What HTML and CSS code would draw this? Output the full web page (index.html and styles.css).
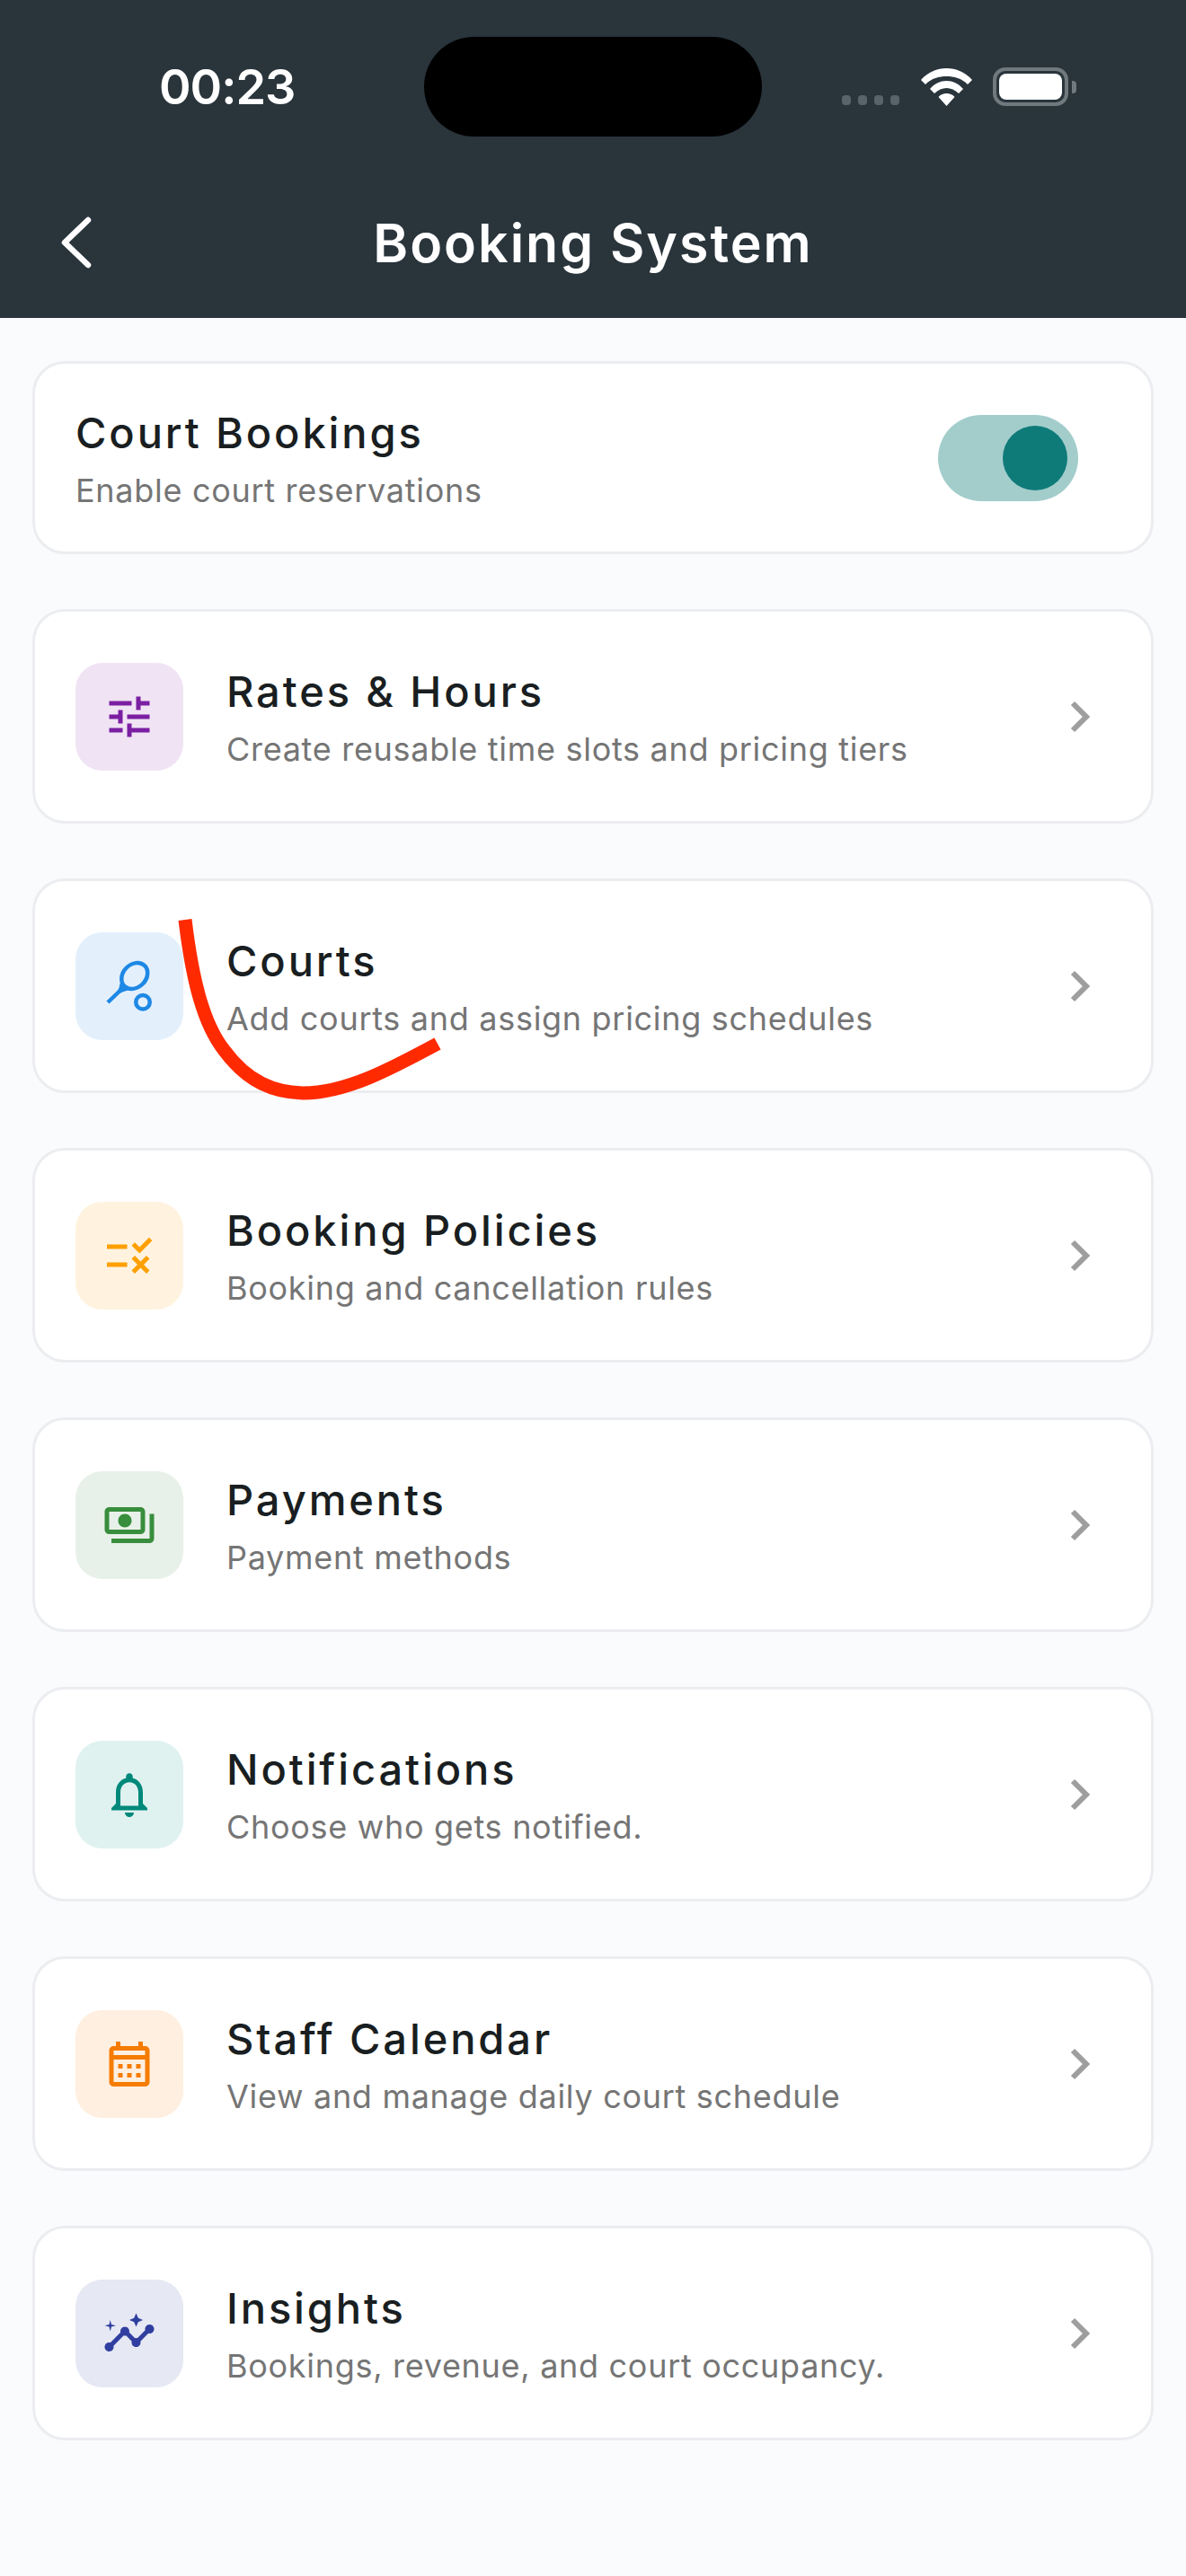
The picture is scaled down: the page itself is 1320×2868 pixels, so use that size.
FILE: index.html
```html
<!DOCTYPE html>
<html lang="en">
<head>
    <meta charset="UTF-8">
    <meta name="viewport" content="width=device-width, initial-scale=1.0">
    <title>Booking System</title>
    <link rel="stylesheet" href="styles.css">
</head>
<body>
    <header class="app-header">
        <div class="status-bar">
            <div class="status-time">00:23</div>
            <div class="island"></div>
            <div class="status-icons">
                <div class="signal">
                    <span></span><span></span><span></span><span></span>
                </div>
                <svg class="wifi" viewBox="0 0 57 42">
                    <path d="M28.500 0C18 0 8 4 0 13l5 5C12 11 20 9 28.500 9S45 11 52 18l5-5C49 4 39 0 28.500 0z"/>
                    <path d="M28.500 14C22 14 15 17 10 23l5 5C19 24 24 22 28.500 22S38 24 42 28l5-5C42 17 35 14 28.500 14z"/>
                    <path d="M28.500 28c-3.500 0-6.500 1-9 4l9 10 9-10c-2.500-3-5.500-4-9-4z"/>
                </svg>
                <div class="battery">
                    <div class="battery-level"></div>
                </div>
                <div class="battery-cap"></div>
            </div>
        </div>
        <div class="nav-bar">
            <svg class="back-icon" viewBox="0 0 40 60">
                <path d="M34 5L8 30l26 25"/>
            </svg>
            <h1>Booking System</h1>
        </div>
    </header>

    <main class="settings-list">
        <section class="card card-toggle">
            <div class="card-text">
                <h2>Court Bookings</h2>
                <p>Enable court reservations</p>
            </div>
            <div class="toggle">
                <div class="toggle-knob"></div>
            </div>
        </section>

        <a class="card card-link">
            <div class="icon-box purple">
                <svg viewBox="0 0 24 24"><path d="M3 17v2h6v-2H3zM3 5v2h10V5H3zm10 16v-2h8v-2h-8v-2h-2v6h2zM7 9v2H3v2h4v2h2V9H7zm14 4v-2H11v2h10zm-6-4h2V7h4V5h-4V3h-2v6z"/></svg>
            </div>
            <div class="card-text">
                <h2>Rates &amp; Hours</h2>
                <p>Create reusable time slots and pricing tiers</p>
            </div>
            <svg class="chevron" viewBox="0 0 30 40"><path d="M6 5l15 15L6 35"/></svg>
        </a>

        <a class="card card-link">
            <div class="icon-box blue">
                <svg class="racket" viewBox="0 0 24 24">
                    <ellipse cx="14.300" cy="7.400" rx="6.400" ry="5.100" transform="rotate(-45 14.300 7.400)"/>
                    <path d="M2.400 19.200L7.400 14.400C8.200 13.600 8.500 12.400 8.700 10.800"/>
                    <path d="M7.400 14.400C8.500 13.600 10 13.300 11.800 12.700"/>
                    <circle cx="18" cy="19.100" r="3.100"/>
                </svg>
            </div>
            <div class="card-text">
                <h2>Courts</h2>
                <p>Add courts and assign pricing schedules</p>
            </div>
            <svg class="chevron" viewBox="0 0 30 40"><path d="M6 5l15 15L6 35"/></svg>
        </a>

        <a class="card card-link">
            <div class="icon-box amber">
                <svg viewBox="0 0 24 24"><path d="M16.54 11 13 7.46l1.41-1.41 2.12 2.12 4.24-4.24 1.41 1.41L16.54 11zM11 7H2v2h9V7zm10 6.41L19.59 12 17 14.59 14.41 12 13 13.41 15.59 16 13 18.59 14.41 20 17 17.41 19.59 20 21 18.59 18.41 16 21 13.41zM11 15H2v2h9v-2z"/></svg>
            </div>
            <div class="card-text">
                <h2>Booking Policies</h2>
                <p>Booking and cancellation rules</p>
            </div>
            <svg class="chevron" viewBox="0 0 30 40"><path d="M6 5l15 15L6 35"/></svg>
        </a>

        <a class="card card-link">
            <div class="icon-box green">
                <svg viewBox="0 0 24 24"><path d="M19 14V6c0-1.1-.9-2-2-2H3c-1.1 0-2 .9-2 2v8c0 1.1.9 2 2 2h14c1.1 0 2-.9 2-2zm-2 0H3V6h14v8zm-7-7c-1.66 0-3 1.34-3 3s1.34 3 3 3 3-1.34 3-3-1.34-3-3-3zm13 0v11c0 1.1-.9 2-2 2H4v-2h17V7h2z"/></svg>
            </div>
            <div class="card-text">
                <h2>Payments</h2>
                <p>Payment methods</p>
            </div>
            <svg class="chevron" viewBox="0 0 30 40"><path d="M6 5l15 15L6 35"/></svg>
        </a>

        <a class="card card-link">
            <div class="icon-box teal">
                <svg viewBox="0 0 24 24"><path d="M12 22c1.1 0 2-.9 2-2h-4c0 1.1.9 2 2 2zm6-6v-5c0-3.07-1.63-5.64-4.5-6.32V4c0-.83-.67-1.5-1.5-1.5s-1.5.67-1.5 1.5v.68C7.64 5.36 6 7.92 6 11v5l-2 2v1h16v-1l-2-2zm-2 1H8v-6c0-2.48 1.51-4.5 4-4.5s4 2.02 4 4.5v6z"/></svg>
            </div>
            <div class="card-text">
                <h2>Notifications</h2>
                <p>Choose who gets notified.</p>
            </div>
            <svg class="chevron" viewBox="0 0 30 40"><path d="M6 5l15 15L6 35"/></svg>
        </a>

        <a class="card card-link">
            <div class="icon-box orange">
                <svg viewBox="0 0 24 24"><path d="M19 4h-1V2h-2v2H8V2H6v2H5c-1.1 0-2 .9-2 2v14c0 1.1.9 2 2 2h14c1.1 0 2-.9 2-2V6c0-1.1-.9-2-2-2zm0 16H5V10h14v10zm0-12H5V6h14v2zM9 14H7v-2h2v2zm4 0h-2v-2h2v2zm4 0h-2v-2h2v2zm-8 4H7v-2h2v2zm4 0h-2v-2h2v2zm4 0h-2v-2h2v2z"/></svg>
            </div>
            <div class="card-text">
                <h2>Staff Calendar</h2>
                <p>View and manage daily court schedule</p>
            </div>
            <svg class="chevron" viewBox="0 0 30 40"><path d="M6 5l15 15L6 35"/></svg>
        </a>

        <a class="card card-link">
            <div class="icon-box indigo">
                <svg viewBox="0 0 24 24"><path d="M21 8c-1.45 0-2.26 1.44-1.93 2.51l-3.55 3.56c-.3-.09-.74-.09-1.04 0l-2.55-2.55C12.27 10.45 11.46 9 10 9c-1.45 0-2.27 1.44-1.93 2.52l-4.56 4.55C2.44 15.74 1 16.55 1 18c0 1.1.9 2 2 2 1.45 0 2.26-1.44 1.93-2.51l4.55-4.56c.3.09.74.09 1.04 0l2.55 2.55C12.73 16.55 13.54 18 15 18c1.45 0 2.27-1.44 1.93-2.52l3.56-3.55c1.07.33 2.51-.48 2.51-1.93 0-1.1-.9-2-2-2z"/><path d="M15 9l.94-2.07L18 6l-2.06-.93L15 3l-.92 2.07L12 6l2.08.93zM3.5 11 4 9l2-.5L4 8l-.5-2L3 8l-2 .5L3 9z"/></svg>
            </div>
            <div class="card-text">
                <h2>Insights</h2>
                <p>Bookings, revenue, and court occupancy.</p>
            </div>
            <svg class="chevron" viewBox="0 0 30 40"><path d="M6 5l15 15L6 35"/></svg>
        </a>
    </main>

    <!-- red annotation drawn over the Courts card -->
    <svg class="scribble" viewBox="0 0 1320 2868">
        <path d="M206 1024C214 1090 226 1140 250 1170C276 1205 305 1216 337 1217C385 1217 435 1190 487 1162"/>
    </svg>
</body>
</html>
```

FILE: styles.css
```css
* {
    margin: 0;
    padding: 0;
    box-sizing: border-box;
}

body {
    background-color: #fafbfd;
    color: #191e21;
    font-family: 'Inter', 'Roboto', sans-serif;
    min-height: 100vh;
    position: relative;
    overflow: hidden;
}

.app-header {
    background-color: #29343b;
    height: 354px;
    color: #ffffff;
    padding-top: 41px;
}

.status-bar {
    display: flex;
    align-items: center;
    height: 111px;
    padding-left: 177px;
}

.status-time {
    width: 295px;
    font-size: 54px;
    font-weight: 600;
    line-height: 1;
    letter-spacing: -1px;
}

.island {
    width: 376px;
    height: 111px;
    background-color: #000000;
    border-radius: 56px;
}

.status-icons {
    display: flex;
    align-items: center;
    height: 43px;
    margin-left: 89px;
}

.signal {
    display: flex;
    gap: 8px;
    align-self: flex-end;
    margin-right: 24px;
    margin-bottom: 1px;
}

.signal span {
    width: 10px;
    height: 11px;
    border-radius: 4px;
    background-color: #59646a;
}

.wifi {
    width: 57px;
    height: 42px;
    fill: #ffffff;
    margin-right: 23px;
}

.battery {
    width: 84px;
    height: 43px;
    border: 4px solid #6f797e;
    border-radius: 14px;
    padding: 3px;
}

.battery-level {
    height: 100%;
    background-color: #ffffff;
    border-radius: 8px;
}

.battery-cap {
    width: 5px;
    height: 14px;
    margin-left: 4px;
    background-color: #6f797e;
    border-radius: 0 4px 4px 0;
}

.nav-bar {
    position: relative;
    height: 120px;
    margin-top: 58px;
    display: flex;
    align-items: center;
    justify-content: center;
}

.nav-bar h1 {
    font-size: 59px;
    font-weight: 600;
    line-height: 1;
    letter-spacing: 2px;
}

.back-icon {
    position: absolute;
    left: 64px;
    top: 30px;
    width: 40px;
    height: 60px;
    fill: none;
    stroke: #ffffff;
    stroke-width: 6.5;
    stroke-linecap: round;
    stroke-linejoin: round;
}

.settings-list {
    display: flex;
    flex-direction: column;
    gap: 61px;
    padding: 48px 36px 0;
}

.card {
    display: flex;
    align-items: center;
    background-color: #ffffff;
    border: 3px solid #ebedf0;
    border-radius: 36px;
}

.card-toggle {
    height: 215px;
    padding: 0 81px 0 45px;
    justify-content: space-between;
}

.card-link {
    height: 239px;
    padding: 0 63px 0 45px;
    gap: 48px;
}

.card-text {
    flex: 1;
}

.card-text h2 {
    font-size: 47px;
    font-weight: 500;
    line-height: 64px;
    letter-spacing: 2.9px;
    margin-bottom: 8px;
}

.card-text p {
    font-size: 36px;
    font-weight: 400;
    line-height: 48px;
    letter-spacing: 0.7px;
    color: #757575;
}

.toggle {
    width: 156px;
    height: 96px;
    padding: 12px;
    display: flex;
    justify-content: flex-end;
    background-color: #a2cdcb;
    border-radius: 48px;
}

.toggle-knob {
    width: 72px;
    height: 72px;
    background-color: #0f7b79;
    border-radius: 50%;
}

.icon-box {
    width: 120px;
    height: 120px;
    flex-shrink: 0;
    display: flex;
    align-items: center;
    justify-content: center;
    border-radius: 30px;
}

.icon-box svg {
    width: 60px;
    height: 60px;
    fill: currentColor;
}

.icon-box .racket {
    fill: none;
    stroke: currentColor;
    stroke-width: 1.8;
}

.purple { background-color: #f0e4f4; color: #7b1fa2; }
.blue { background-color: #e3f0fc; color: #1e88e5; }
.amber { background-color: #fff3e0; color: #ffa000; }
.green { background-color: #e8f1e9; color: #388e3c; }
.teal { background-color: #e0f2f0; color: #00897b; }
.orange { background-color: #ffefe0; color: #f57c00; }
.indigo { background-color: #e6e8f4; color: #303f9f; }

.chevron {
    width: 30px;
    height: 40px;
    fill: none;
    stroke: #9e9e9e;
    stroke-width: 6;
}

.scribble {
    position: absolute;
    top: 0;
    left: 0;
    width: 1320px;
    height: 2868px;
    fill: none;
    stroke: #ff2a00;
    stroke-width: 15;
    pointer-events: none;
}
```
